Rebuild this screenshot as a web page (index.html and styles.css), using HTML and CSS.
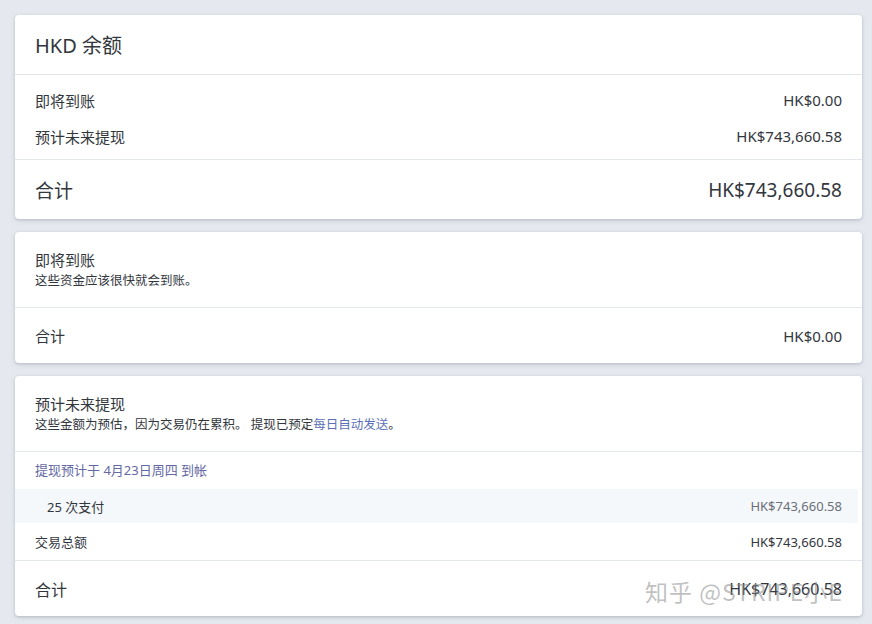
FILE: index.html
```html
<!DOCTYPE html>
<html>
  <head>
    <meta charset="UTF-8"/>
    <title>HKD 余额</title>
    <link rel="stylesheet" href="styles.css">
  </head>
  <body>
    <div class="page">
      <section class="card">
        <div class="card-head big">HKD 余额</div>
        <div class="rows">
          <div class="row"><span>即将到账</span><span class="amt">HK$0.00</span></div>
          <div class="row"><span>预计未来提现</span><span class="amt">HK$743,660.58</span></div>
        </div>
        <div class="total big"><span>合计</span><span class="amt">HK$743,660.58</span></div>
      </section>

      <section class="card">
        <div class="card-head">
          <div class="title">即将到账</div>
          <div class="sub">这些资金应该很快就会到账。</div>
        </div>
        <div class="total"><span>合计</span><span class="amt">HK$0.00</span></div>
      </section>

      <section class="card">
        <div class="card-head">
          <div class="title">预计未来提现</div>
          <div class="sub">这些金额为预估，因为交易仍在累积。 提现已预定<a href="#">每日自动发送</a>。</div>
        </div>
        <div class="payout-date">提现预计于 4月23日周四 到帐</div>
        <div class="row small shaded"><span>25 次支付</span><span class="amt muted">HK$743,660.58</span></div>
        <div class="row small"><span>交易总额</span><span class="amt">HK$743,660.58</span></div>
        <div class="total last"><span>合计</span><span class="amt">HK$743,660.58</span></div>
      </section>
    </div>
    <div class="watermark">知乎 @STRIPE小E</div>
  </body>
</html>
```

FILE: styles.css
```css
body {
  margin: 0;
  background: #e5e9ef;
  font-family: "Noto Sans", "Noto Sans CJK SC", sans-serif;
  color: #32363d;
}

.page {
  display: flex;
  flex-direction: column;
  gap: 13px;
  padding: 15px 10px 10px 15px;
}

.card {
  background: #fff;
  border-radius: 4px;
  box-shadow: 0 1px 3px rgba(50, 60, 80, 0.22), 0 2px 6px rgba(50, 60, 80, 0.08);
  overflow: hidden;
}

.card-head {
  padding: 17px 20px 16px;
  border-bottom: 1px solid #e3e6ea;
}
.card-head.big {
  height: 59px;
  padding: 0 20px;
  display: flex;
  align-items: center;
  font-size: 20px;
}

.title {
  font-size: 15px;
  line-height: 22px;
}
.sub {
  font-size: 12.5px;
  line-height: 20px;
}
.sub a {
  color: #5b6fb8;
  text-decoration: none;
}

.rows {
  padding: 7px 0 5px;
  border-bottom: 1px solid #e3e6ea;
}

.row {
  display: flex;
  justify-content: space-between;
  align-items: center;
  height: 36px;
  padding: 0 20px;
  font-size: 15px;
}
.row.small {
  font-size: 13px;
  height: 37px;
}
.row.shaded {
  background: #f5f8fb;
  height: 34px;
  margin-right: 4px;
  padding: 0 16px 0 32px;
}

.amt.muted {
  color: #6a6f78;
}

.payout-date {
  height: 35px;
  padding-bottom: 2px;
  display: flex;
  align-items: center;
  padding-left: 20px;
  font-size: 13px;
  color: #6468a4;
}

.total {
  display: flex;
  justify-content: space-between;
  align-items: center;
  height: 55px;
  padding: 0 20px;
  font-size: 15px;
}
.total.big {
  height: 59px;
  font-size: 19px;
}
.total.last {
  border-top: 1px solid #e3e6ea;
  font-size: 16px;
}

.watermark {
  position: absolute;
  left: 645px;
  top: 574px;
  font-size: 23px;
  letter-spacing: 1px;
  color: rgba(140, 140, 140, 0.55);
  font-family: "Noto Sans CJK SC", sans-serif;
  pointer-events: none;
}
```
